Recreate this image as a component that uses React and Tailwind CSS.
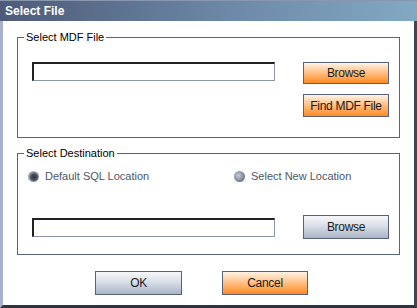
import React from 'react';

const font = { fontFamily: '"Liberation Sans", Arial, sans-serif' };

const Btn = ({ children, orange, className = '' }) => (
  <button
    className={`flex items-center justify-center border border-[#59627a] text-[12px] tracking-[-0.3px] text-[#1a1a1a] ${
      orange
        ? 'bg-[linear-gradient(to_bottom,#fff3e6_0%,#ffc48a_45%,#ff8a24_100%)]'
        : 'bg-[linear-gradient(to_bottom,#f7f8fa_0%,#d5dbe5_50%,#a9b4c6_100%)]'
    } ${className}`}
  >
    {children}
  </button>
);

const Field = () => (
  <div className="h-[19px] w-[243px] border-t-2 border-l-2 border-t-[#222] border-l-[#222] border-b border-r border-b-[#8b95aa] border-r-[#8b95aa] bg-white" />
);

const Radio = ({ checked, label }) => (
  <div className="flex items-center gap-[6px]">
    <span
      className={`h-[11px] w-[11px] rounded-full ${
        checked
          ? 'bg-[radial-gradient(circle_at_55%_55%,#2f3440_0%,#4a5060_35%,#9aa0ab_60%,#d8dbe0_100%)]'
          : 'bg-[radial-gradient(circle_at_40%_40%,#c9ced8_0%,#7d8594_60%,#4f5664_100%)]'
      }`}
    />
    <span className="text-[11px] text-[#4e5566]">{label}</span>
  </div>
);

export default function App() {
  return (
    <div className="w-[417px] h-[308px] bg-white flex flex-col" style={font}>
      <div className="h-[21px] shrink-0 flex items-center pl-[5px] bg-[linear-gradient(to_right,#4d5b78,#6d88a8_55%,#82a9c4)] border-t border-t-[#8896b0]">
        <span className="text-white font-bold text-[12px]">Select File</span>
      </div>
      <div className="flex-1 flex flex-col border-l-[3px] border-l-[#a7b2c9] border-r-[3px] border-r-[#3d4558] border-b-[3px] border-b-[#2e3442]">
        <fieldset className="ml-[14px] mt-[10px] w-[383px] h-[107px] border border-[#5b6479] p-0 m-0">
          <legend className="ml-[6px] px-[2px] text-[11px] leading-[13px] text-black">Select MDF File</legend>
          <div className="flex items-start mt-[18px] ml-[14px]">
            <Field />
            <div className="ml-[28px] flex flex-col gap-[10px]">
              <Btn orange className="w-[86px] h-[22px]">Browse</Btn>
              <Btn orange className="w-[86px] h-[23px]">Find MDF File</Btn>
            </div>
          </div>
        </fieldset>

        <fieldset className="ml-[14px] mt-[9px] w-[383px] h-[108px] border border-[#5b6479] p-0">
          <legend className="ml-[6px] px-[2px] text-[11px] leading-[13px] text-black">Select Destination</legend>
          <div className="flex items-center mt-[9px] ml-[10px] h-[14px]">
            <div className="w-[206px]">
              <Radio checked label="Default SQL Location" />
            </div>
            <Radio label="Select New Location" />
          </div>
          <div className="flex items-center mt-[32px] ml-[14px]">
            <Field />
            <Btn className="ml-[28px] w-[86px] h-[24px]">Browse</Btn>
          </div>
        </fieldset>

        <div className="flex mt-[16px] ml-[92px] gap-[40px]">
          <Btn className="w-[87px] h-[24px]">OK</Btn>
          <Btn orange className="w-[86px] h-[24px]">Cancel</Btn>
        </div>
      </div>
    </div>
  );
}
